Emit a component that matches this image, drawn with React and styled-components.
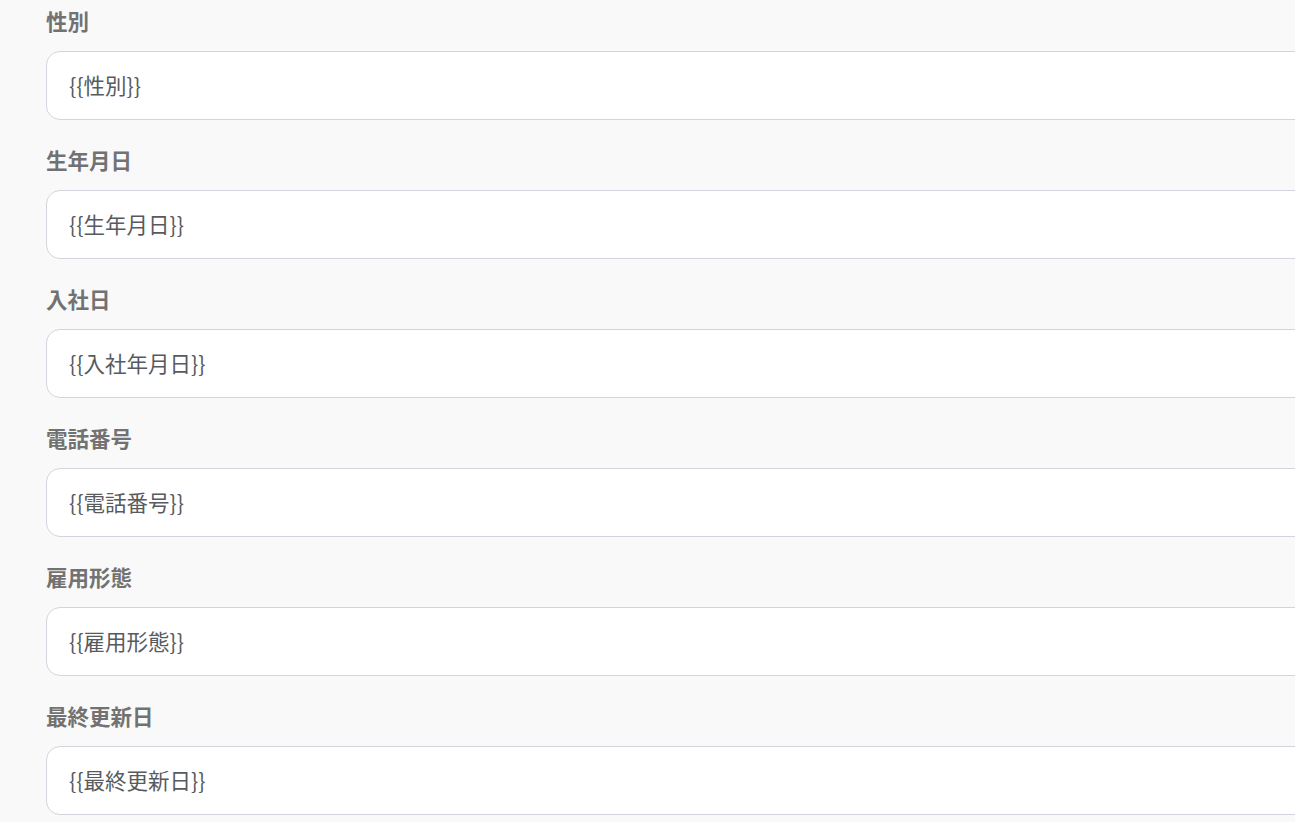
import React from 'react';
import styled, { createGlobalStyle } from 'styled-components';

const GlobalStyle = createGlobalStyle`
  html, body {
    margin: 0;
    padding: 0;
    background: #f9f9f9;
    overflow: hidden;
  }
  body {
    font-family: "Noto Sans CJK JP", "Noto Sans", sans-serif;
  }
`

const Viewport = styled.div`
  width: 100vw;
  height: 100vh;
  overflow: hidden;
`

const Page = styled.div`
  width: 1400px;
  padding: 6px 0 0 46px;
  display: flex;
  flex-direction: column;
  gap: 25px;
`

const Field = styled.div`
  display: flex;
  flex-direction: column;
  gap: 15px;
`

const Label = styled.div`
  font-size: 21.5px;
  line-height: 30px;
  font-weight: 700;
  color: #727272;
`

const Input = styled.div`
  box-sizing: border-box;
  height: 69px;
  border: 1px solid #d4d4de;
  border-radius: 14px;
  background: #ffffff;
  display: flex;
  align-items: center;
  padding: 0 0 3px 22px;
  font-size: 21.5px;
  color: #575b60;
`

const fields = [
  { label: '性別', value: '{{性別}}' },
  { label: '生年月日', value: '{{生年月日}}' },
  { label: '入社日', value: '{{入社年月日}}' },
  { label: '電話番号', value: '{{電話番号}}' },
  { label: '雇用形態', value: '{{雇用形態}}' },
  { label: '最終更新日', value: '{{最終更新日}}' },
];

function App() {
  return (
    <>
      <GlobalStyle />
      <Viewport>
        <Page>
          {fields.map((f) => (
            <Field key={f.label}>
              <Label>{f.label}</Label>
              <Input>{f.value}</Input>
            </Field>
          ))}
        </Page>
      </Viewport>
    </>
  );
}

export default App;
